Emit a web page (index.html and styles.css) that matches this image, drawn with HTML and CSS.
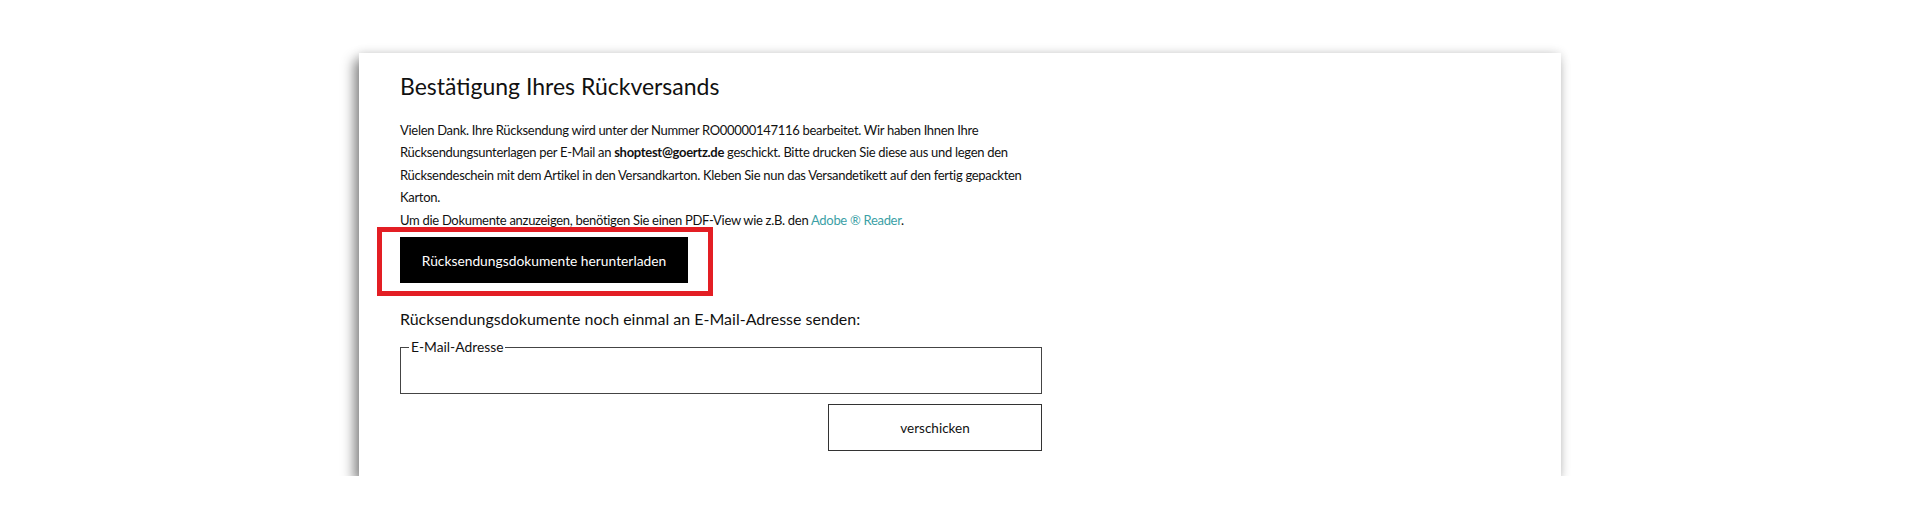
FILE: index.html
```html
<!DOCTYPE html>
<html lang="de">
<head>
  <meta charset="UTF-8" />
  <meta name="viewport" content="width=device-width, initial-scale=1.0" />
  <title>Bestätigung Ihres Rückversands</title>
  <link rel="stylesheet" href="styles.css">
</head>
<body>

<div class="page">
  <div class="card">
    <h1 class="title">Bestätigung Ihres Rückversands</h1>

    <p class="note">
      Vielen Dank. Ihre Rücksendung wird unter der Nummer RO00000147116 bearbeitet. Wir haben Ihnen Ihre
      Rücksendungsunterlagen per E-Mail an <strong>shoptest@goertz.de</strong> geschickt. Bitte drucken Sie diese aus und legen den
      Rücksendeschein mit dem Artikel in den Versandkarton. Kleben Sie nun das Versandetikett auf den fertig gepackten
      Karton.<br>
      Um die Dokumente anzuzeigen, benötigen Sie einen PDF-View wie z.B. den <a href="#" class="link">Adobe ® Reader</a>.
    </p>

    <div class="download">
      <button class="btn-dark" type="button">Rücksendungsdokumente herunterladen</button>
      <span class="highlight"></span>
    </div>

    <h2 class="resend-title">Rücksendungsdokumente noch einmal an E-Mail-Adresse senden:</h2>

    <form class="resend-form" onsubmit="return false;">
      <fieldset class="field">
        <legend>E-Mail-Adresse</legend>
        <input type="email" id="email" />
      </fieldset>
      <div class="actions">
        <button class="btn-outline" type="submit">verschicken</button>
      </div>
    </form>
  </div>
</div>

</body>
</html>
```

FILE: styles.css
```css
body {
  font-family: Lato, "Liberation Sans", Arial, sans-serif;
  background-color: white;
  color: #111;
  margin: 0;
  padding: 0;
}

.page {
  padding-top: 53px;
}

.card {
  width: 1202px;
  margin: 0 auto;
  box-sizing: border-box;
  padding: 12px 41px 25px;
  background: #fff;
  box-shadow: -5px 7px 12px rgba(0, 0, 0, 0.45), 0 0 10px rgba(0, 0, 0, 0.12);
}

.title {
  font-size: 23px;
  font-weight: 400;
  margin: 0 0 12px;
  line-height: 42px;
}

.note {
  width: 642px;
  font-size: 13px;
  letter-spacing: -0.3px;
  line-height: 22.4px;
  margin: 0;
}

.link {
  color: #3c9fa6;
  text-decoration: none;
}

.download {
  position: relative;
  margin-top: 6px;
  width: 288px;
}

.btn-dark {
  display: block;
  width: 288px;
  height: 46px;
  background: #000;
  color: #fff;
  border: none;
  font-family: inherit;
  font-size: 13.8px;
  cursor: pointer;
}

.highlight {
  position: absolute;
  top: -10px;
  left: -23px;
  width: 326px;
  height: 59px;
  border: 5px solid #e31e24;
  pointer-events: none;
}

.resend-title {
  font-size: 16px;
  font-weight: 400;
  margin: 26px 0 10px;
  line-height: 20px;
}

.resend-form {
  width: 642px;
}

.field {
  margin: 0;
  padding: 0 8px;
  border: 1px solid #444;
}

.field legend {
  font-size: 13.8px;
  line-height: 16px;
  padding: 0 2px;
}

.field input {
  display: block;
  width: 100%;
  box-sizing: border-box;
  border: none;
  outline: none;
  height: 38px;
  padding: 0;
  font-family: inherit;
  font-size: 14px;
}

.actions {
  display: flex;
  justify-content: flex-end;
  margin-top: 10px;
}

.btn-outline {
  width: 214px;
  height: 47px;
  background: #fff;
  border: 1px solid #333;
  font-family: inherit;
  font-size: 13.5px;
  color: #111;
  cursor: pointer;
}
```
